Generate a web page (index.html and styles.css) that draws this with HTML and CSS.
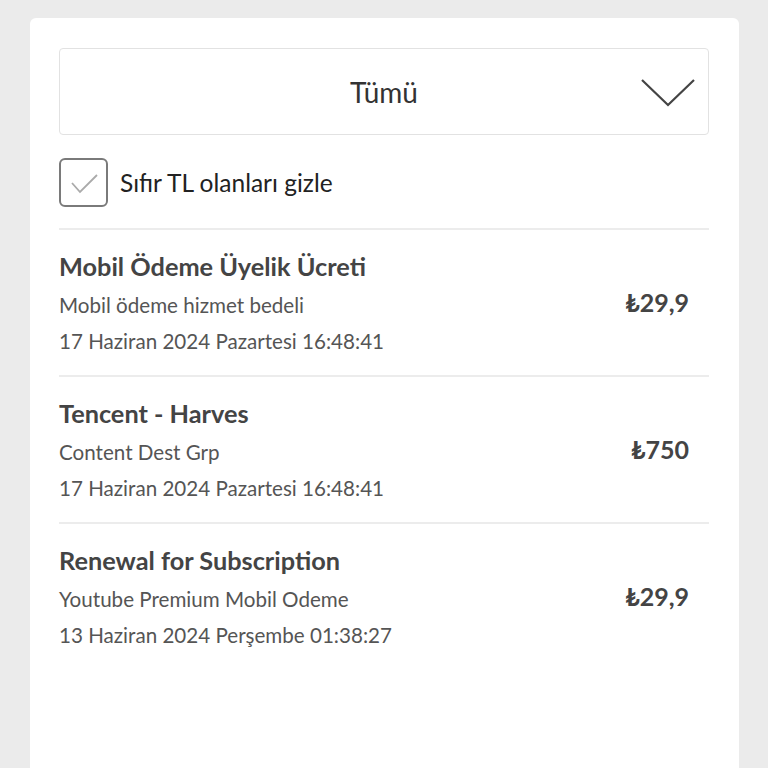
FILE: index.html
```html
<!DOCTYPE html>
<html lang="tr">
<head>
    <meta charset="UTF-8">
    <meta name="viewport" content="width=device-width, initial-scale=1.0">
    <title>İşlemler</title>
    <link rel="stylesheet" href="styles.css">
</head>
<body>

<div class="card">
    <div class="select-box">
        <span class="select-value">Tümü</span>
        <svg class="chevron" width="54" height="30" viewBox="0 0 54 30">
            <path d="M1 2 L27 27 L53 2" fill="none" stroke="#444" stroke-width="2.2"/>
        </svg>
    </div>

    <label class="check-row">
        <span class="check-box">
            <svg width="45" height="45" viewBox="0 0 45 45">
                <path d="M11 23 L19 32 L36 15" fill="none" stroke="#aaa" stroke-width="1.8"/>
            </svg>
        </span>
        <span class="check-label">Sıfır TL olanları gizle</span>
    </label>

    <div class="list">
        <div class="item">
            <div class="item-info">
                <div class="item-title">Mobil Ödeme Üyelik Ücreti</div>
                <div class="item-line">Mobil ödeme hizmet bedeli</div>
                <div class="item-line">17 Haziran 2024 Pazartesi 16:48:41</div>
            </div>
            <div class="item-price">₺29,9</div>
        </div>
        <div class="item">
            <div class="item-info">
                <div class="item-title">Tencent - Harves</div>
                <div class="item-line">Content Dest Grp</div>
                <div class="item-line">17 Haziran 2024 Pazartesi 16:48:41</div>
            </div>
            <div class="item-price">₺750</div>
        </div>
        <div class="item">
            <div class="item-info">
                <div class="item-title">Renewal for Subscription</div>
                <div class="item-line">Youtube Premium Mobil Odeme</div>
                <div class="item-line">13 Haziran 2024 Perşembe 01:38:27</div>
            </div>
            <div class="item-price">₺29,9</div>
        </div>
    </div>
</div>

</body>
</html>
```

FILE: styles.css
```css
body {
    margin: 0;
    background: #ebebeb;
    font-family: Lato, "DejaVu Sans", sans-serif;
}
.card {
    margin: 18px 0 0 30px;
    width: 709px;
    min-height: 750px;
    box-sizing: border-box;
    padding: 30px 30px 0 29px;
    background: #fff;
    border-radius: 6px 6px 0 0;
}
.select-box {
    position: relative;
    height: 87px;
    box-sizing: border-box;
    border: 1px solid #e2e2e2;
    border-radius: 4px;
    display: flex;
    align-items: center;
    justify-content: center;
}
.select-value {
    font-size: 28px;
    color: #333;
}
.chevron {
    position: absolute;
    right: 13px;
    top: 29px;
}
.check-row {
    display: flex;
    align-items: center;
    gap: 12px;
    margin-top: 23px;
    padding-bottom: 21px;
}
.check-box {
    width: 49px;
    height: 49px;
    box-sizing: border-box;
    border: 2px solid #7a7a7a;
    border-radius: 6px;
    display: flex;
    align-items: center;
    justify-content: center;
}
.check-label {
    font-size: 24.5px;
    color: #222;
}
.item {
    display: flex;
    align-items: center;
    border-top: 2px solid #ececec;
    padding: 21px 0 16px;
}
.item-info {
    flex: 1;
}
.item-title {
    font-size: 25.3px;
    font-weight: bold;
    line-height: 30px;
    color: #444;
    margin-bottom: 6px;
}
.item-line {
    font-size: 20.6px;
    line-height: 36px;
    color: #555;
}
.item-price {
    font-size: 25px;
    font-weight: bold;
    color: #444;
    margin-right: 20px;
    margin-top: -6px;
}
```
